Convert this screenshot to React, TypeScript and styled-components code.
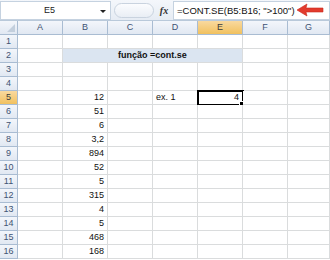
import React from "react";
import styled, { createGlobalStyle } from "styled-components";

const Global = createGlobalStyle`
  html, body { margin: 0; padding: 0; background: #fff; }
  body { font-family: "Liberation Sans", Arial, sans-serif; }
  * { box-sizing: border-box; }
`;

const Sheet = styled.div`
  width: 330px;
  height: 260px;
  overflow: hidden;
  background: #fff;
`;

const FormulaBar = styled.div`
  display: flex;
  align-items: center;
  height: 21px;
  background: linear-gradient(#f4f7fb, #e6ecf4);
  border-bottom: 1px solid #b9c9da;
`;

const NameBox = styled.div`
  position: relative;
  width: 111px;
  height: 19px;
  background: #fff;
  border: 1px solid #c5d2e0;
  font-size: 9px;
  color: #222;
  display: flex;
  align-items: center;
  justify-content: center;
  padding-right: 12px;
`;

const DropArrow = styled.span`
  position: absolute;
  right: 4px;
  top: 8px;
  width: 0;
  height: 0;
  border-left: 3px solid transparent;
  border-right: 3px solid transparent;
  border-top: 3px solid #222;
`;

const Pill = styled.div`
  margin-left: 3px;
  width: 40px;
  height: 15px;
  border-radius: 8px;
  border: 1px solid #c9d3df;
  background: linear-gradient(#fbfcfe, #e9eef5);
`;

const Fx = styled.div`
  width: 18px;
  font-family: "Liberation Serif", serif;
  font-style: italic;
  font-weight: bold;
  font-size: 10px;
  color: #333;
  text-align: center;
  margin-left: 1px;
`;

const FormulaInput = styled.div`
  flex: 1;
  height: 19px;
  background: #fff;
  border: 1px solid #c5d2e0;
  display: flex;
  align-items: center;
  padding-left: 3px;
  font-size: 9.5px;
  color: #111;
  gap: 1px;
  white-space: nowrap;
  overflow: hidden;
`;

const Row = styled.div`
  display: grid;
  grid-template-columns: 18px repeat(6, 45px) 1fr;
  height: 14px;
`;

const HeadCell = styled.div<{ $sel?: boolean }>`
  background: ${(p) =>
    p.$sel
      ? "linear-gradient(#f9d99f, #f1c15f)"
      : "linear-gradient(#f3f6fb, #e1e8f2)"};
  border-right: 1px solid #a9bcd2;
  border-bottom: 1px solid #a9bcd2;
  font-size: 9px;
  color: ${(p) => (p.$sel ? "#3b3b3b" : "#3f5374")};
  display: flex;
  align-items: center;
  justify-content: center;
  line-height: 1;
`;

const Corner = styled(HeadCell)`
  position: relative;
  &::after {
    content: "";
    position: absolute;
    right: 2px;
    bottom: 2px;
    border-left: 8px solid transparent;
    border-bottom: 8px solid #c3cfdd;
  }
`;

const Cell = styled.div<{ $span?: number; $align?: string; $bold?: boolean; $fill?: string }>`
  position: relative;
  grid-column: span ${(p) => p.$span || 1};
  border-right: 1px solid #dadcdd;
  border-bottom: 1px solid #dadcdd;
  background: ${(p) => p.$fill || "#fff"};
  font-size: 9px;
  font-weight: ${(p) => (p.$bold ? "bold" : "normal")};
  color: #111;
  display: flex;
  align-items: center;
  justify-content: ${(p) => p.$align || "flex-start"};
  padding: 0 3px;
  line-height: 1;
  white-space: nowrap;
`;

const Selection = styled.div`
  position: absolute;
  left: -1px;
  top: -1px;
  right: -2px;
  bottom: -2px;
  border: 2px solid #000;
  &::after {
    content: "";
    position: absolute;
    right: -3px;
    bottom: -3px;
    width: 4px;
    height: 4px;
    background: #000;
    border: 1px solid #fff;
  }
`;

const cols = ["A", "B", "C", "D", "E", "F", "G"];
const values: Record<number, string> = {
  5: "12",
  6: "51",
  7: "6",
  8: "3,2",
  9: "894",
  10: "52",
  11: "5",
  12: "315",
  13: "4",
  14: "5",
  15: "468",
  16: "168",
};

function Arrow() {
  return (
    <svg width="28" height="14" viewBox="0 0 28 14" style={{ flexShrink: 0 }}>
      <path d="M1 7 L11 1 L10 5 L27 5 L27 9 L10 9 L11 13 Z" fill="#e23b2e" stroke="#c9281d" strokeWidth="0.6" />
    </svg>
  );
}

function SheetRow({ n }: { n: number }) {
  if (n === 2) {
    return (
      <Row>
        <HeadCell>{n}</HeadCell>
        <Cell />
        <Cell $span={4} $align="center" $bold $fill="#dbe5f1">
          função =cont.se
        </Cell>
        <Cell />
        <Cell />
      </Row>
    );
  }
  return (
    <Row>
      <HeadCell $sel={n === 5}>{n}</HeadCell>
      <Cell />
      <Cell $align="flex-end">{values[n]}</Cell>
      <Cell />
      <Cell>{n === 5 ? "ex. 1" : ""}</Cell>
      <Cell $align="flex-end">
        {n === 5 ? "4" : ""}
        {n === 5 && <Selection />}
      </Cell>
      <Cell />
      <Cell />
    </Row>
  );
}

export default function App() {
  return (
    <Sheet>
      <Global />
      <FormulaBar>
        <NameBox>
          E5
          <DropArrow />
        </NameBox>
        <Pill />
        <Fx>fx</Fx>
        <FormulaInput>
          <span>=CONT.SE(B5:B16; "&gt;100")</span>
          <Arrow />
        </FormulaInput>
      </FormulaBar>
      <Row>
        <Corner />
        {cols.map((c) => (
          <HeadCell key={c} $sel={c === "E"}>
            {c}
          </HeadCell>
        ))}
      </Row>
      {Array.from({ length: 16 }, (_, i) => (
        <SheetRow key={i} n={i + 1} />
      ))}
    </Sheet>
  );
}
